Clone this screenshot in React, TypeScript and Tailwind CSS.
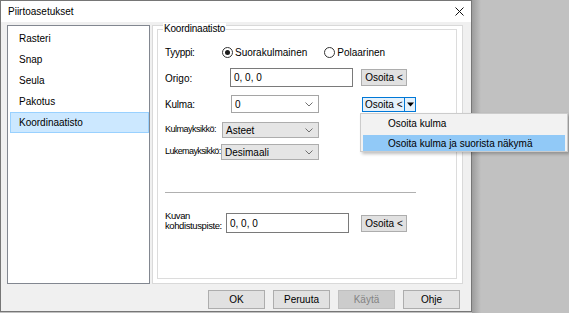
import { FC, ReactNode } from "react";

const Chevron: FC = () => (
  <svg width="8" height="5" viewBox="0 0 8 5" className="shrink-0">
    <polyline points="0.5,0.5 4,4 7.5,0.5" fill="none" stroke="#707070" strokeWidth="1" />
  </svg>
);

const Radio: FC<{ checked?: boolean; label: string }> = ({ checked, label }) => (
  <div className="flex items-center gap-[2px]">
    <div className="w-[11px] h-[11px] rounded-full border border-[#333333] bg-white flex items-center justify-center">
      {checked && <div className="w-[5px] h-[5px] rounded-full bg-[#1a1a1a]" />}
    </div>
    <span>{label}</span>
  </div>
);

const Btn: FC<{ children: ReactNode; w?: string; h?: string; disabled?: boolean }> = ({
  children,
  w = "w-[46px]",
  h = "h-[17px]",
  disabled,
}) => (
  <div
    className={`${w} ${h} flex items-center justify-center border ${
      disabled ? "border-[#bfbfbf] bg-[#cccccc] text-[#838383]" : "border-[#adadad] bg-[#e1e1e1]"
    }`}
  >
    {children}
  </div>
);

const Combo: FC<{ value: string; w: string; h: string; gray?: boolean }> = ({ value, w, h, gray }) => (
  <div
    className={`${w} ${h} flex items-center justify-between pl-[3px] pr-[5px] border ${
      gray ? "border-[#adadad] bg-[#e5e5e5]" : "border-[#a5a5a5] bg-white"
    }`}
  >
    <span>{value}</span>
    <Chevron />
  </div>
);

const items = ["Rasteri", "Snap", "Seula", "Pakotus", "Koordinaatisto"];

export default function App() {
  return (
    <div className="relative flex w-[569px] h-[313px] bg-[#c1c1c1] overflow-hidden font-['Liberation_Sans',Arial,sans-serif] text-[10px] text-black">
      <div className="flex flex-col w-[472px] h-[312px] shrink-0 border border-[#767676] bg-[#f0f0f0]">
        {/* title bar */}
        <div className="flex items-center justify-between h-[21px] bg-white pl-[7px] pr-[7px]">
          <span className="text-[10px]">Piirtoasetukset</span>
          <svg width="9" height="9" viewBox="0 0 9 9">
            <path d="M0.5 0.5 L8.5 8.5 M8.5 0.5 L0.5 8.5" stroke="#111" strokeWidth="1" />
          </svg>
        </div>

        <div className="flex gap-[2px] pl-[6px] pr-[8px] pt-[3px]">
          {/* list */}
          <div className="w-[143px] h-[259px] border border-[#828790] bg-white pt-[2px] flex flex-col">
            {items.map((it) => (
              <div
                key={it}
                className={`h-[21px] ml-[2px] pl-[8px] flex items-center border ${
                  it === "Koordinaatisto" ? "border-[#99d1ff] bg-[#cce8ff]" : "border-transparent"
                }`}
              >
                {it}
              </div>
            ))}
          </div>

          {/* right panel */}
          <div className="w-[311px] h-[259px] border border-[#d9d9d9] bg-white pl-[4px] pt-[3px]">
            <div className="relative w-[300px] h-[250px] border border-[#dcdcdc] pl-[7px] flex flex-col">
              <span className="absolute left-[5px] -top-[7px] bg-white px-[1px] leading-[12px] tracking-[-0.2px]">
                Koordinaatisto
              </span>

              <div className="flex items-center h-[17px] mt-[14px]">
                <span className="w-[57px] tracking-[-0.3px]">Tyyppi:</span>
                <Radio checked label="Suorakulmainen" />
                <div className="ml-[17px]">
                  <Radio label="Polaarinen" />
                </div>
              </div>

              <div className="flex items-center h-[19px] mt-[7px]">
                <span className="w-[65px] mt-[2px]">Origo:</span>
                <div className="w-[123px] h-[19px] border border-[#7a7a7a] bg-white flex items-center pl-[3px]">
                  0, 0, 0
                </div>
                <div className="ml-[8px]">
                  <Btn>Osoita &lt;</Btn>
                </div>
              </div>

              <div className="flex items-center h-[18px] mt-[8px]">
                <span className="w-[66px] tracking-[-0.2px]">Kulma:</span>
                <Combo value="0" w="w-[88px]" h="h-[18px]" />
                <div className="ml-[43px] flex w-[54px] h-[15px] border border-[#0078d7]">
                  <div className="w-[41px] bg-[#e5f1fb] flex items-center pl-[2px]">Osoita &lt;</div>
                  <div className="flex-1 border-l border-[#0078d7] bg-[#e5f1fb] flex items-center justify-center">
                    <svg width="7" height="5" viewBox="0 0 7 5">
                      <path d="M0 0.5 H7 L3.5 4.5 Z" fill="#000" />
                    </svg>
                  </div>
                </div>
              </div>

              <div className="flex items-center h-[16px] mt-[9px]">
                <span className="w-[57px] shrink-0 whitespace-nowrap text-[9px] tracking-[-0.5px]">Kulmayksikkö:</span>
                <Combo value="Asteet" w="w-[97px]" h="h-[16px]" gray />
              </div>

              <div className="flex items-center h-[16px] mt-[6px]">
                <span className="w-[56px] shrink-0 whitespace-nowrap text-[9px] tracking-[-0.6px]">Lukemayksikkö:</span>
                <Combo value="Desimaali" w="w-[98px]" h="h-[16px]" gray />
              </div>

              <div className="w-[251px] h-px bg-[#b0b0b0] mt-[32px]" />

              <div className="flex items-center h-[20px] mt-[20px]">
                <span className="w-[61px] shrink-0 whitespace-nowrap leading-[10px] -mt-[4px] text-[9.5px] tracking-[-0.4px]">
                  Kuvan
                  <br />
                  kohdistuspiste:
                </span>
                <div className="w-[123px] h-[20px] border border-[#7a7a7a] bg-white flex items-center pl-[3px]">
                  0, 0, 0
                </div>
                <div className="ml-[12px]">
                  <Btn>Osoita &lt;</Btn>
                </div>
              </div>
            </div>
          </div>
        </div>

        {/* footer */}
        <div className="flex justify-end gap-[8px] pr-[11px] mt-[6px]">
          <Btn w="w-[57px]" h="h-[19px]">OK</Btn>
          <Btn w="w-[57px]" h="h-[19px]">Peruuta</Btn>
          <Btn w="w-[57px]" h="h-[19px]" disabled>Käytä</Btn>
          <Btn w="w-[57px]" h="h-[19px]">Ohje</Btn>
        </div>
      </div>

      <div className="w-[9px] h-full bg-linear-to-r from-[#9c9c9c] to-[#c1c1c1]" />

      {/* dropdown menu */}
      <div className="absolute left-[360px] top-[113px] w-[208px] h-[39px] bg-[#f2f2f2] border border-[#cccccc] shadow-[2px_2px_3px_rgba(0,0,0,0.25)] flex flex-col">
        <div className="h-[19px] flex items-center pl-[27px]">Osoita kulma</div>
        <div className="h-[16px] mt-[2px] mx-[2px] bg-[#91c9f7] flex items-center pl-[25px]">
          Osoita kulma ja suorista näkymä
        </div>
      </div>
    </div>
  );
}
